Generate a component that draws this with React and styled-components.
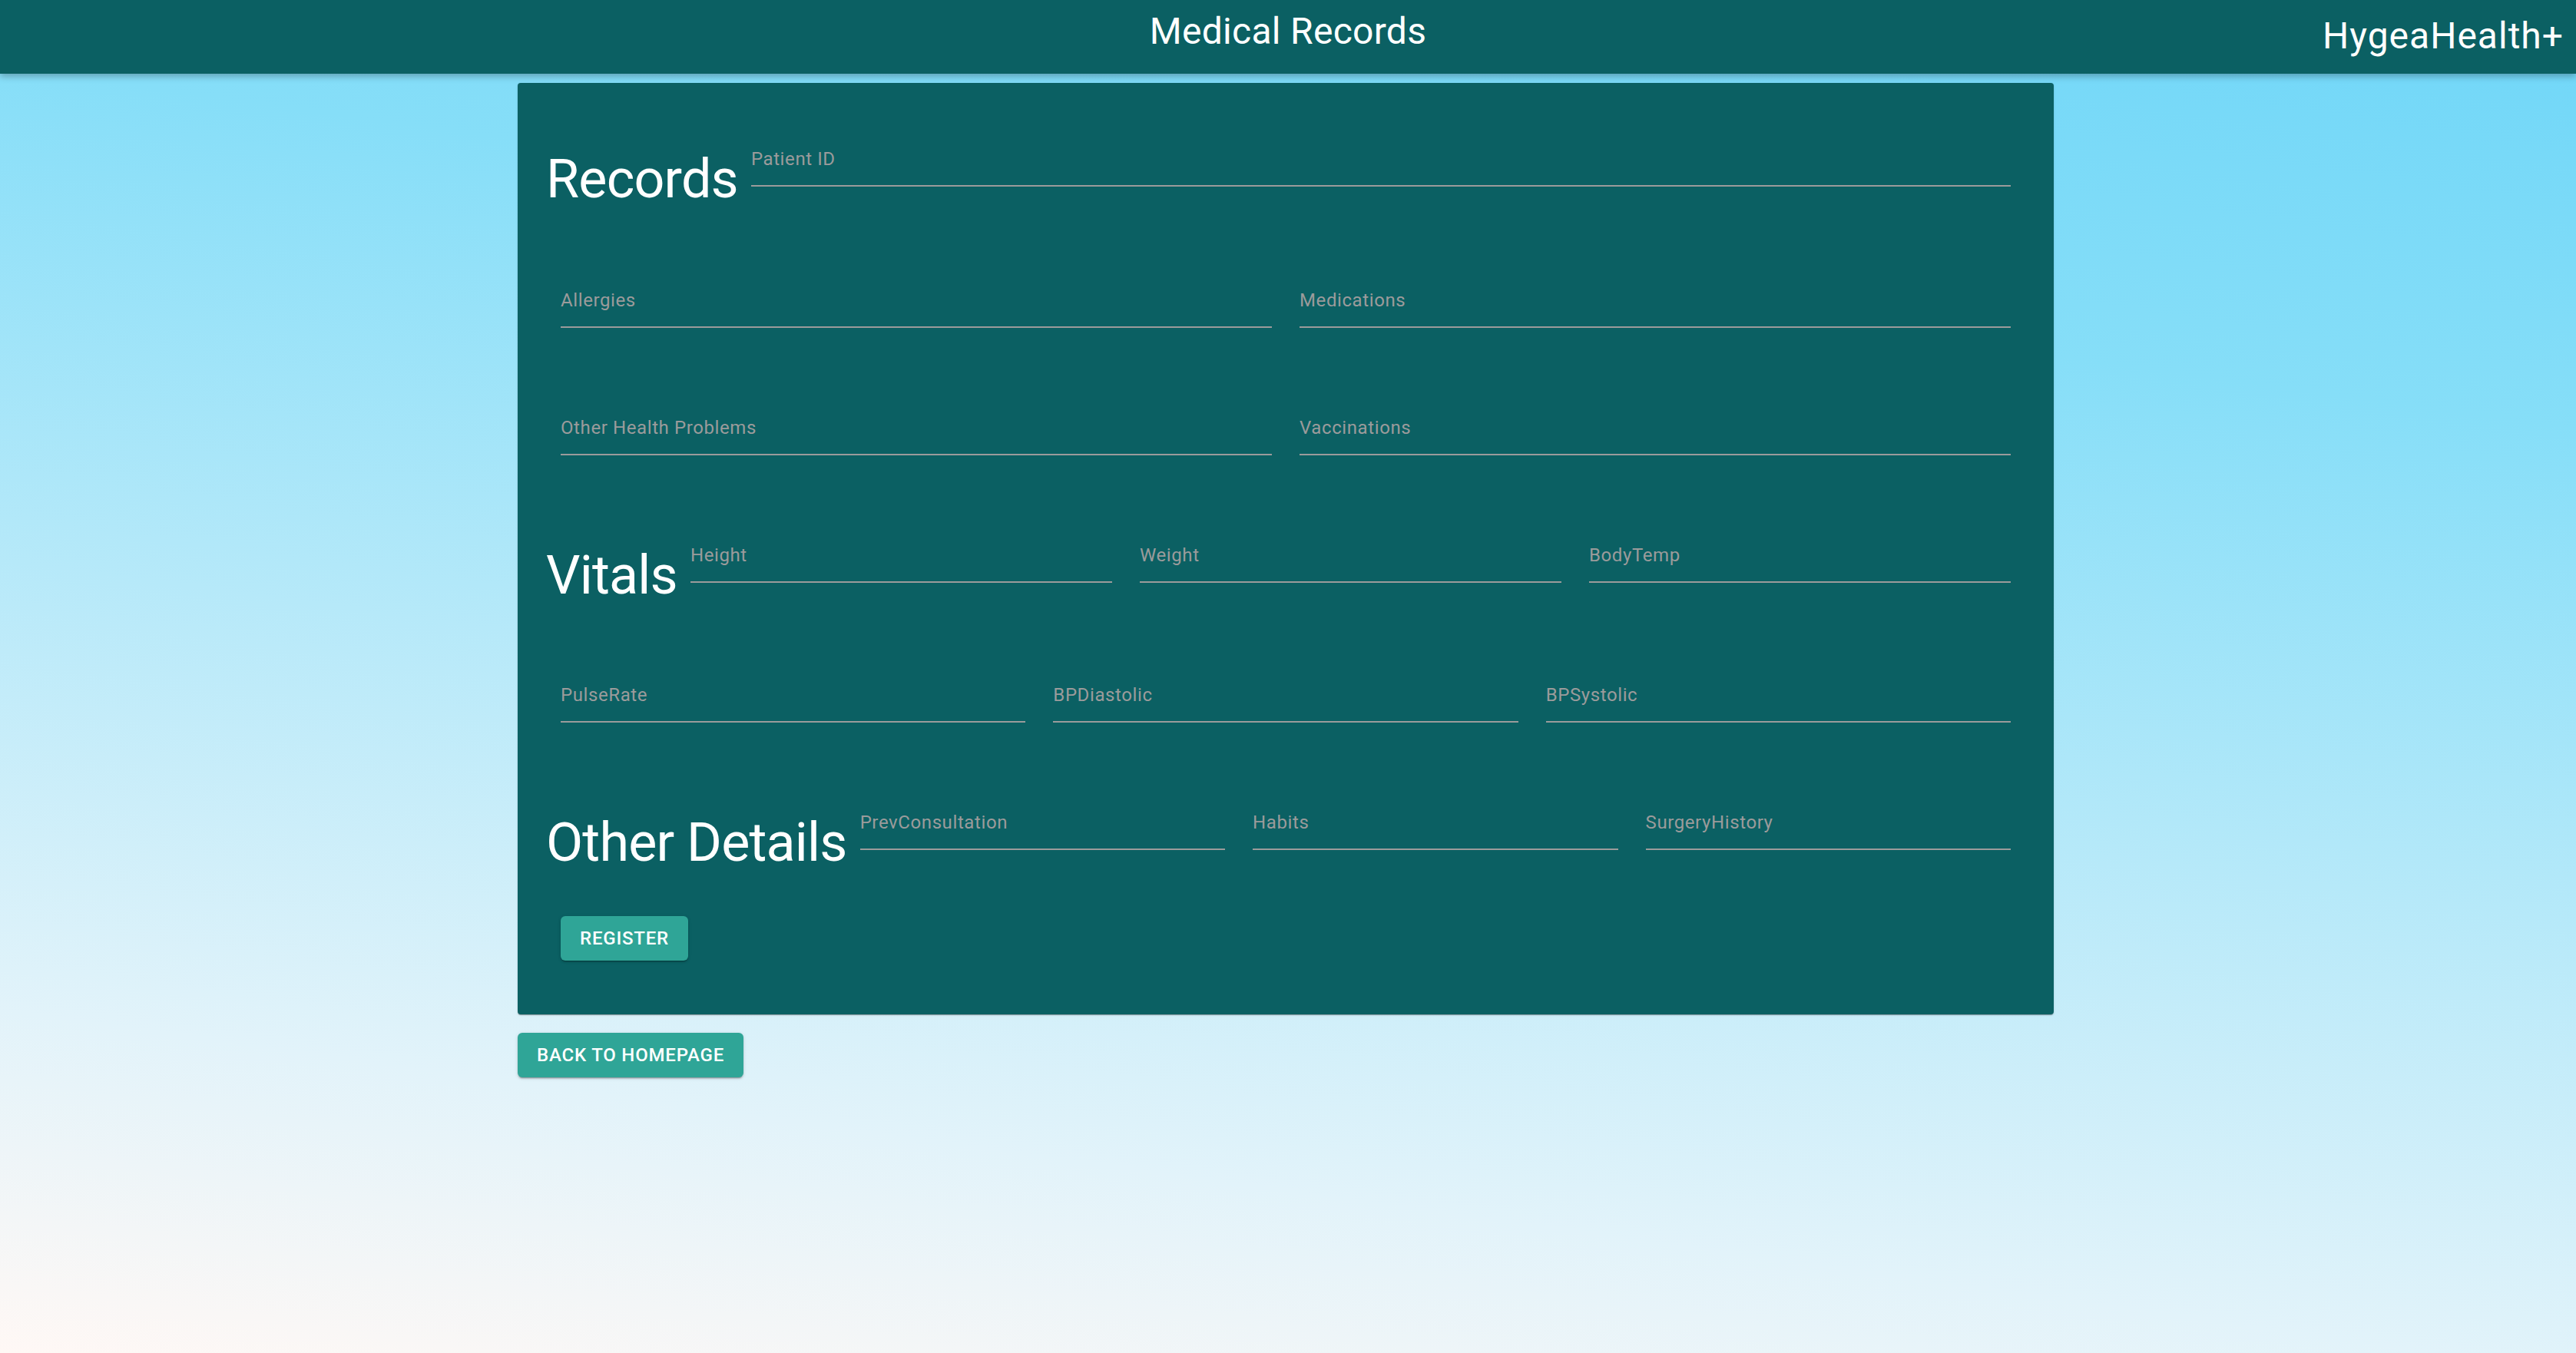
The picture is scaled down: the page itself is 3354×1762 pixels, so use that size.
import React from "react";
import styled, { createGlobalStyle } from "styled-components";

const GlobalStyle = createGlobalStyle`
  html, body {
    margin: 0;
    padding: 0;
  }
  body {
    min-height: 100vh;
    font-family: Roboto, "Helvetica Neue", Arial, sans-serif;
    background: linear-gradient(8deg, #fff8f5 0%, #e2f3fa 20%, #86def8 75%, #6fd6f8 100%);
    background-attachment: fixed;
  }
`;

const records = [
  { top: 136, fields: ["Allergies", "Medications"] },
  { top: 118, fields: ["Other Health Problems", "Vaccinations"] },
];

const App = () => {
  return (
    <>
      <GlobalStyle />
      <Header>
        <PageTitle>Medical Records</PageTitle>
        <Brand>HygeaHealth+</Brand>
      </Header>
      <Main>
        <Card>
          <Row>
            <SectionTitle>Records</SectionTitle>
            <Field label="Patient ID" />
          </Row>
          {records.map((row) => (
            <Row key={row.fields[0]} $top={row.top} $inset>
              {row.fields.map((f) => (
                <Field key={f} label={f} />
              ))}
            </Row>
          ))}
          <Row $top={118}>
            <SectionTitle>Vitals</SectionTitle>
            <Field label="Height" />
            <Field label="Weight" />
            <Field label="BodyTemp" />
          </Row>
          <Row $top={134} $inset>
            <Field label="PulseRate" />
            <Field label="BPDiastolic" />
            <Field label="BPSystolic" />
          </Row>
          <Row $top={118}>
            <SectionTitle>Other Details</SectionTitle>
            <Field label="PrevConsultation" />
            <Field label="Habits" />
            <Field label="SurgeryHistory" />
          </Row>
          <Actions>
            <Button type="button">Register</Button>
          </Actions>
        </Card>
        <BackRow>
          <Button type="button">Back to Homepage</Button>
        </BackRow>
      </Main>
    </>
  );
};

const Field = ({ label }) => (
  <FieldBox>
    <Label>{label}</Label>
  </FieldBox>
);

export default App;

const Header = styled.header`
  position: relative;
  z-index: 1;
  height: 96px;
  display: grid;
  grid-template-columns: 1fr auto 1fr;
  align-items: start;
  background: #0b6063;
  color: #fff;
  box-shadow: 0 4px 8px rgba(0, 0, 0, 0.25);
`;

const PageTitle = styled.h1`
  grid-column: 2;
  margin: 17px 0 0;
  font-size: 48px;
  line-height: 48px;
  font-weight: 400;
  letter-spacing: 0.3px;
`;

const Brand = styled.div`
  grid-column: 3;
  justify-self: end;
  margin: 23px 16px 0 0;
  font-size: 48px;
  line-height: 48px;
  letter-spacing: 1px;
`;

const Main = styled.main`
  width: 2000px;
  margin: 12px 0 0 calc(50% - 1003px);
`;

const Card = styled.section`
  background: #0b6063;
  border-radius: 4px;
  padding: 87px 56px 70px 37px;
  box-shadow: 0 2px 1px -1px rgba(0, 0, 0, 0.2), 0 1px 1px 0 rgba(0, 0, 0, 0.14),
    0 1px 3px 0 rgba(0, 0, 0, 0.12);
`;

const Row = styled.div`
  display: flex;
  align-items: flex-end;
  gap: 36px;
  margin-top: ${(p) => p.$top || 0}px;
  padding-left: ${(p) => (p.$inset ? 19 : 0)}px;
`;

const SectionTitle = styled.h2`
  margin: 0 -19px -25px 0;
  font-size: 70px;
  line-height: 70px;
  font-weight: 400;
  letter-spacing: -0.8px;
  color: #fff;
  white-space: nowrap;
`;

const FieldBox = styled.div`
  flex: 1;
  min-width: 0;
  padding-bottom: 22px;
  border-bottom: 2px solid #9b9b9b;
`;

const Label = styled.label`
  display: block;
  font-size: 24px;
  line-height: 24px;
  letter-spacing: 0.6px;
  color: #9b9b9b;
`;

const Actions = styled.div`
  display: flex;
  margin-top: 86px;
  padding-left: 19px;
`;

const BackRow = styled.div`
  display: flex;
  margin-top: 24px;
`;

const Button = styled.button`
  height: 58px;
  padding: 0 25px;
  border: none;
  border-radius: 6px;
  background: #2fa597;
  color: #fff;
  font-family: Roboto, sans-serif;
  font-weight: 500;
  font-size: 24px;
  letter-spacing: 0.8px;
  text-transform: uppercase;
  cursor: pointer;
  box-shadow: 0 3px 1px -2px rgba(0, 0, 0, 0.2), 0 2px 2px 0 rgba(0, 0, 0, 0.14),
    0 1px 5px 0 rgba(0, 0, 0, 0.12);
`;
